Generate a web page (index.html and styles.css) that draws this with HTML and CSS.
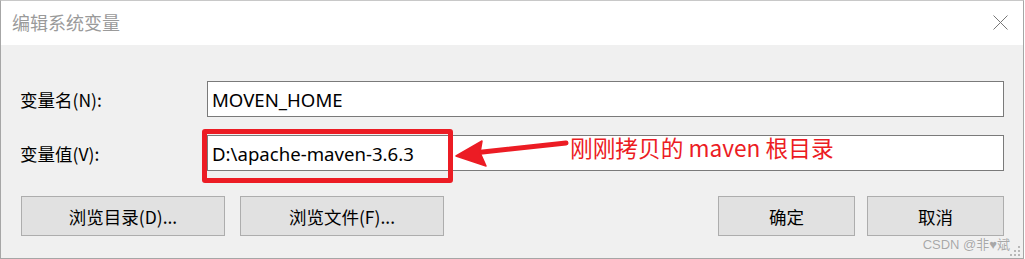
FILE: index.html
```html
<!DOCTYPE html>
<html lang="zh-CN">
<head>
<meta charset="utf-8">
<title>编辑系统变量</title>
<link rel="stylesheet" href="styles.css">
</head>
<body>
<div class="window">
  <div class="titlebar">
    <span class="title">编辑系统变量</span>
    <svg class="close" width="15" height="15" viewBox="0 0 15 15"><path d="M0.5 0.5 L14.5 14.5 M14.5 0.5 L0.5 14.5" stroke="#777" stroke-width="1" fill="none"/></svg>
  </div>
  <div class="content">
    <div class="row">
      <span class="label">变量名(N):</span>
      <div class="field">MOVEN_HOME</div>
    </div>
    <div class="row row-second">
      <span class="label">变量值(V):</span>
      <div class="field">D:\apache-maven-3.6.3</div>
    </div>
    <div class="buttons">
      <div class="btn-group">
        <div class="btn btn-wide">浏览目录(D)...</div>
        <div class="btn btn-wide">浏览文件(F)...</div>
      </div>
      <div class="btn-group">
        <div class="btn btn-small">确定</div>
        <div class="btn btn-small">取消</div>
      </div>
    </div>
  </div>
  <div class="highlight"></div>
  <svg class="arrow" width="1025" height="259" viewBox="0 0 1025 259">
    <line x1="478" y1="152.5" x2="566" y2="143" stroke="#ec1c24" stroke-width="5" stroke-linecap="round"/>
    <polygon points="456,156 482,141 480,152.5 486,166" fill="#ec1c24" stroke="#ec1c24" stroke-width="1.5" stroke-linejoin="round"/>
  </svg>
  <div class="note">刚刚拷贝的 maven 根目录</div>
  <div class="watermark">CSDN @非♥斌</div>
  <svg class="grip" width="12" height="12" viewBox="0 0 12 12">
    <rect x="9" y="1" width="2" height="2" fill="#b8b8b8"/>
    <rect x="5" y="5" width="2" height="2" fill="#b8b8b8"/>
    <rect x="9" y="5" width="2" height="2" fill="#b8b8b8"/>
    <rect x="1" y="9" width="2" height="2" fill="#b8b8b8"/>
    <rect x="5" y="9" width="2" height="2" fill="#b8b8b8"/>
    <rect x="9" y="9" width="2" height="2" fill="#b8b8b8"/>
  </svg>
</div>
</body>
</html>
```

FILE: styles.css
```css
html, body {
  margin: 0;
  padding: 0;
  background: #ffffff;
}

.window {
  position: relative;
  width: 1024px;
  height: 259px;
  box-sizing: border-box;
  border: 1px solid #a6a6a6;
  border-top-color: #c8c8c8;
  background: #f0f0f0;
  display: flex;
  flex-direction: column;
  font-family: "Noto Sans", "Noto Sans CJK SC", sans-serif;
  overflow: hidden;
}

.titlebar {
  height: 44px;
  flex: none;
  background: #ffffff;
  display: flex;
  align-items: center;
  justify-content: space-between;
  padding: 0 15px 0 11px;
}

.title {
  font-family: "Noto Sans CJK SC", sans-serif;
  font-size: 18px;
  color: #9a9a9a;
  margin-top: -2px;
}

.close {
  display: block;
  margin-top: -2px;
}

.content {
  padding: 36px 19px 0 19px;
  display: flex;
  flex-direction: column;
}

.row {
  display: flex;
  align-items: center;
  height: 36px;
}

.row-second {
  margin-top: 18px;
}

.label {
  width: 187px;
  font-family: "Noto Sans CJK SC", sans-serif;
  font-size: 17.5px;
  color: #000;
}

.field {
  flex: 1;
  height: 36px;
  box-sizing: border-box;
  border: 1px solid #7a7a7a;
  background: #ffffff;
  padding-left: 4px;
  display: flex;
  align-items: center;
  font-family: "Noto Sans", sans-serif;
  font-size: 18.6px;
  color: #000;
}

.buttons {
  margin-top: 25px;
  display: flex;
  justify-content: space-between;
  padding-left: 1px;
}

.btn-group {
  display: flex;
  gap: 12px;
}

.btn-group:first-child {
  gap: 15px;
}

.btn {
  height: 40px;
  box-sizing: border-box;
  border: 1px solid #adadad;
  background: #e1e1e1;
  display: flex;
  align-items: center;
  justify-content: center;
  font-family: "Noto Sans CJK SC", sans-serif;
  font-size: 17.5px;
  color: #000;
}

.btn-wide {
  width: 204px;
}

.btn-small {
  width: 137px;
}

.highlight {
  position: absolute;
  left: 201px;
  top: 128px;
  width: 251px;
  height: 54px;
  box-sizing: border-box;
  border: 5px solid #ec1c24;
  border-radius: 3px;
}

.arrow {
  position: absolute;
  left: -1px;
  top: -1px;
}

.note {
  position: absolute;
  left: 569px;
  top: 134px;
  font-family: "Noto Sans CJK SC", sans-serif;
  font-size: 22.7px;
  line-height: 26px;
  color: #ec1c24;
}

.watermark {
  position: absolute;
  right: 13px;
  bottom: 5px;
  font-family: "Liberation Sans", "Noto Sans CJK SC", sans-serif;
  font-size: 13px;
  color: #a8a8a8;
  text-shadow: 0 0 1px #ffffff;
}

.grip {
  position: absolute;
  right: 2px;
  bottom: 1px;
}
```
